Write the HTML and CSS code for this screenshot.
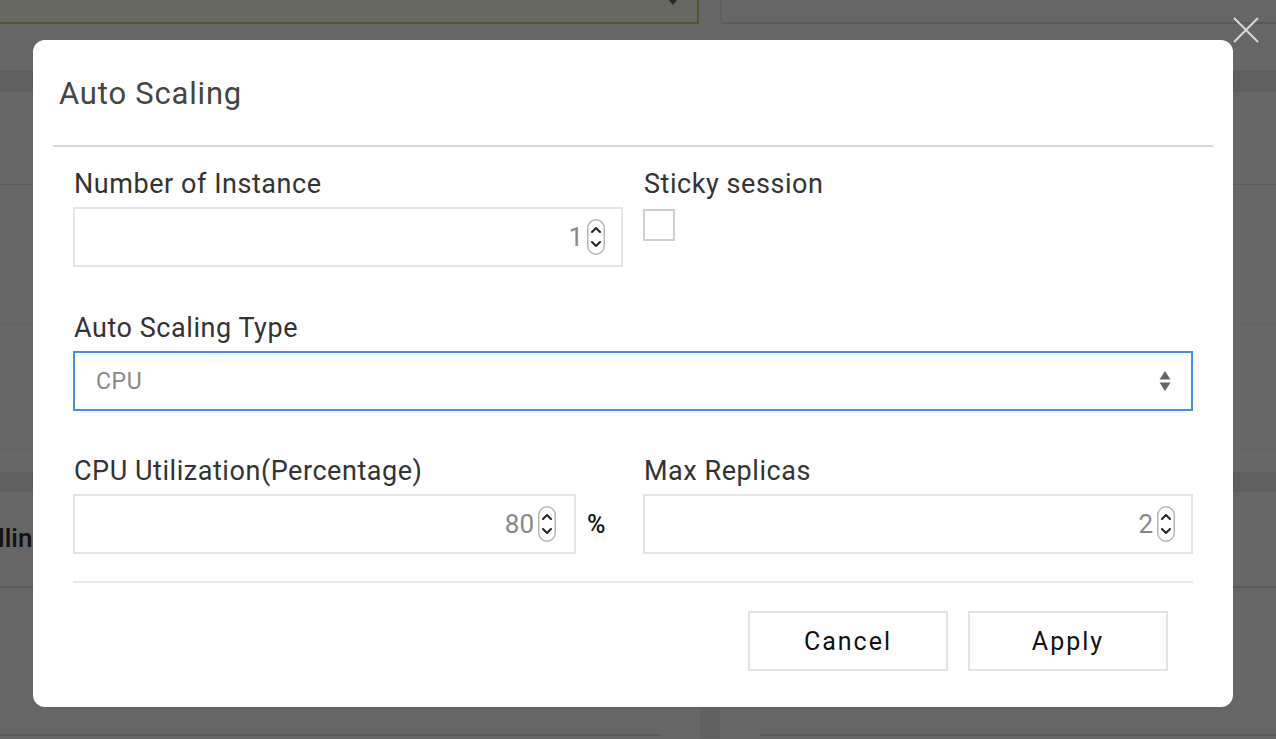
FILE: index.html
```html
<!DOCTYPE html>
<html>
<head>
<meta charset="utf-8">
<link rel="stylesheet" href="styles.css">
</head>
<body>
<div class="page">
  <div class="topbar">
    <div class="top-select"><svg class="caret" width="8" height="6" viewBox="0 0 8 6"><path d="M0 0 L8 0 L4 5 Z" fill="#2a2a2a"/></svg></div>
    <div class="top-box"></div>
  </div>
  <div class="band band-a"></div>
  <div class="sec sec-1"></div>
  <div class="sec sec-2"></div>
  <div class="sec sec-3"></div>
  <div class="band band-b"></div>
  <div class="sec sec-4"><span class="bg-title">Rolling Update</span></div>
  <div class="sec sec-5"></div>
  <div class="bottom-row">
    <div class="bottom-left"></div>
    <div class="bottom-strip"></div>
    <div class="bottom-right"></div>
  </div>
</div>

<div class="close-x" aria-label="close">
  <svg width="28" height="28" viewBox="0 0 28 28"><path d="M2 2 L26 26 M26 2 L2 26" stroke="#d8d8d8" stroke-width="2" fill="none"/></svg>
</div>

<div class="modal">
  <div class="modal-header">
    <h2 class="modal-title">Auto Scaling</h2>
  </div>
  <div class="modal-body">
    <div class="row">
      <div class="field">
        <label class="label">Number of Instance</label>
        <div class="num-input">
          <span class="num-value">1</span>
          <span class="spinner"><svg width="18" height="36" viewBox="0 0 18 36"><rect x="0.75" y="0.75" width="16.5" height="34.5" rx="8.25" fill="#fff" stroke="#b5b5b5" stroke-width="1.5"/><path d="M5 13 L9 9 L13 13 M5 23 L9 27 L13 23" stroke="#222" stroke-width="2" fill="none" stroke-linecap="round" stroke-linejoin="round"/></svg></span>
        </div>
      </div>
      <div class="field">
        <label class="label">Sticky session</label>
        <div class="checkbox"></div>
      </div>
    </div>
    <div class="field full">
      <label class="label">Auto Scaling Type</label>
      <div class="select">
        <span class="select-value">CPU</span>
        <svg class="select-arrows" width="12" height="22" viewBox="0 0 12 22"><path d="M6 1 L11.5 9.5 L0.5 9.5 Z M6 21 L11.5 12.5 L0.5 12.5 Z" fill="#666"/></svg>
      </div>
    </div>
    <div class="row">
      <div class="field">
        <label class="label">CPU Utilization(Percentage)</label>
        <div class="with-unit">
          <div class="num-input short">
            <span class="num-value">80</span>
            <span class="spinner"><svg width="18" height="36" viewBox="0 0 18 36"><rect x="0.75" y="0.75" width="16.5" height="34.5" rx="8.25" fill="#fff" stroke="#b5b5b5" stroke-width="1.5"/><path d="M5 13 L9 9 L13 13 M5 23 L9 27 L13 23" stroke="#222" stroke-width="2" fill="none" stroke-linecap="round" stroke-linejoin="round"/></svg></span>
          </div>
          <span class="unit">%</span>
        </div>
      </div>
      <div class="field">
        <label class="label">Max Replicas</label>
        <div class="num-input">
          <span class="num-value">2</span>
          <span class="spinner"><svg width="18" height="36" viewBox="0 0 18 36"><rect x="0.75" y="0.75" width="16.5" height="34.5" rx="8.25" fill="#fff" stroke="#b5b5b5" stroke-width="1.5"/><path d="M5 13 L9 9 L13 13 M5 23 L9 27 L13 23" stroke="#222" stroke-width="2" fill="none" stroke-linecap="round" stroke-linejoin="round"/></svg></span>
        </div>
      </div>
    </div>
    <div class="divider"></div>
    <div class="actions">
      <button class="btn">Cancel</button>
      <button class="btn">Apply</button>
    </div>
  </div>
</div>
</body>
</html>
```
FILE: styles.css
```css
* { box-sizing: border-box; }
html, body { margin: 0; padding: 0; }
body {
  width: 1276px;
  height: 739px;
  overflow: hidden;
  background: #666666;
  font-family: Roboto, "Liberation Sans", sans-serif;
  position: relative;
}

/* background page (dimmed) */
.page { width: 1276px; height: 739px; overflow: hidden; }
.topbar { display: flex; height: 24px; }
.top-select {
  width: 699px;
  height: 24px;
  background: #656760;
  border-right: 2px solid #4c5a30;
  border-bottom: 2px solid #4c5a30;
  position: relative;
}
.caret { position: absolute; right: 20px; top: 0; display: block; }
.top-box {
  margin-left: 21px;
  flex: 1;
  height: 24px;
  border-left: 2px solid #5e5e5e;
  border-bottom: 2px solid #5a5a5a;
}
.band { background: #5e5e5e; }
.band-a { margin-top: 46px; height: 22px; }
.sec { border-bottom: 1px solid #5a5a5a; }
.sec-1 { height: 93px; border-bottom-color: #595959; }
.sec-2 { height: 139px; border-bottom-color: #616161; }
.sec-3 { height: 126px; border-bottom-color: #616161; }
.band-b { margin-top: 22px; height: 20px; }
.sec-4 { height: 95px; border-bottom-color: #585858; padding-top: 31px; }
.bg-title {
  display: block;
  margin-left: -33px;
  font-size: 26px;
  font-weight: 500;
  color: #111;
  white-space: nowrap;
}
.bottom-row { display: flex; height: 150px; }
.bottom-left { width: 660px; height: 148px; border-bottom: 2px solid #585858; }
.bottom-strip { margin-left: 40px; width: 20px; background: #606060; }
.bottom-right { margin-left: 40px; flex: 1; height: 148px; border-bottom: 2px solid #585858; }

/* close */
.close-x { position: absolute; left: 1232px; top: 16px; width: 28px; height: 28px; }
.close-x svg { display: block; }

/* modal */
.modal {
  position: absolute;
  left: 33px;
  top: 40px;
  width: 1200px;
  height: 667px;
  background: #fff;
  border-radius: 12px;
}
.modal-header {
  margin: 0 20px;
  padding: 34px 6px 31px;
  border-bottom: 2px solid #d6d6d6;
}
.modal-title {
  margin: 0;
  font-size: 31px;
  line-height: 40px;
  letter-spacing: 0.8px;
  font-weight: 400;
  color: #444;
}
.modal-body { padding: 22px 40px 0; }
.row { display: grid; grid-template-columns: 550px 550px; column-gap: 20px; }
.field { display: flex; flex-direction: column; }
.full { margin-top: 46px; }
.row + .full + .row { margin-top: 45px; }
.label {
  display: block;
  font-size: 27px;
  line-height: 30px;
  letter-spacing: 0.55px;
  color: #333;
  padding-left: 1px;
  margin-bottom: 8px;
}
.num-input {
  height: 60px;
  border: 2px solid #e4e4e4;
  display: flex;
  align-items: center;
  justify-content: flex-end;
  padding-right: 16px;
}
.num-value { font-size: 26px; color: #888; margin-right: 4px; }
.spinner { display: flex; }
.spinner svg { display: block; }
.with-unit { display: flex; align-items: center; }
.short { width: 503px; padding-right: 18px; }
.unit { margin-left: 11px; font-size: 25px; font-weight: 500; color: #111; }
.checkbox {
  width: 32px;
  height: 32px;
  border: 2px solid #cfcfcf;
  margin-top: 2px;
}
.select {
  height: 60px;
  border: 2px solid #4a90e2;
  display: flex;
  align-items: center;
  justify-content: space-between;
  padding: 0 20px 0 21px;
}
.select-value { font-size: 23px; letter-spacing: 0.6px; color: #888; }
.select-arrows { display: block; }
.divider { margin-top: 27px; border-top: 2px solid #e6e6e6; }
.actions {
  display: flex;
  justify-content: flex-end;
  gap: 20px;
  margin-top: 28px;
  padding-right: 25px;
}
.btn {
  width: 200px;
  height: 60px;
  background: #fff;
  border: 2px solid #e2e2e2;
  font-family: Roboto, "Liberation Sans", sans-serif;
  font-size: 25px;
  letter-spacing: 2px;
  color: #111;
  cursor: pointer;
}
```
